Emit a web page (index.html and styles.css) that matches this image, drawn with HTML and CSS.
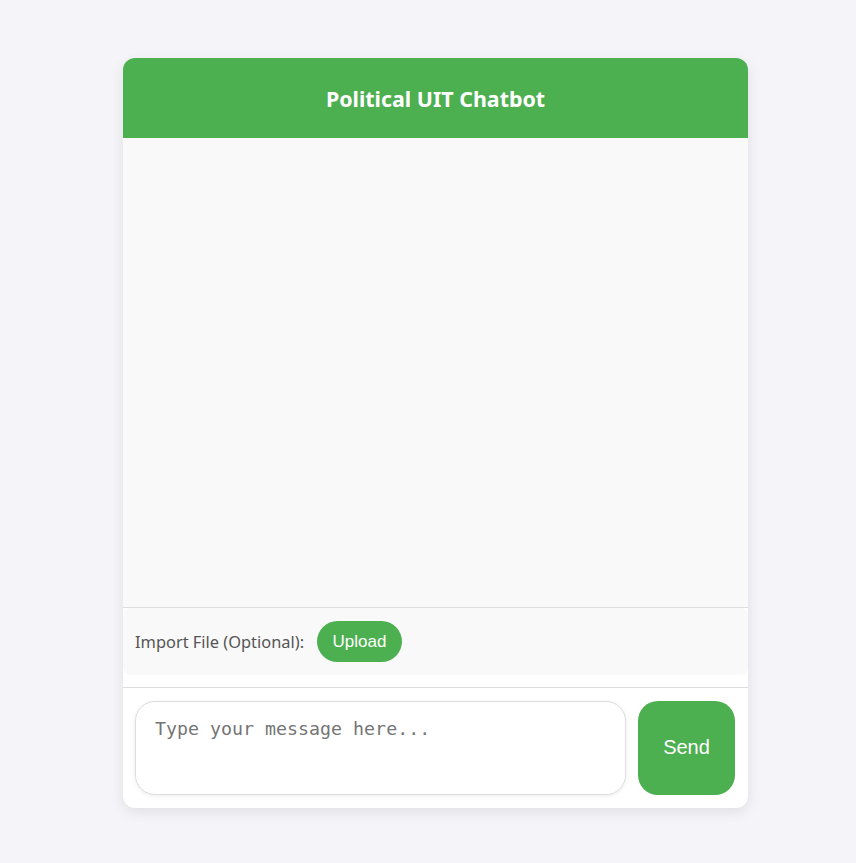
FILE: index.html
```html
<!DOCTYPE html>
<html lang="en">
<head>
<meta charset="utf-8">
<title>Political UIT Chatbot</title>
<link rel="stylesheet" href="styles.css">
</head>
<body>
<div class="chat-card">
  <header class="chat-header">Political UIT Chatbot</header>
  <div class="chat-messages"></div>
  <div class="upload-area">
    <span class="upload-label">Import File (Optional):</span>
    <button class="upload-btn" type="button">Upload</button>
  </div>
  <form class="chat-form" onsubmit="return false;">
    <textarea class="chat-input" placeholder="Type your message here..."></textarea>
    <button class="send-btn" type="submit">Send</button>
  </form>
</div>
</body>
</html>
```
FILE: styles.css
```css
html, body {
  margin: 0;
  padding: 0;
}
body {
  background: #f4f4f9;
  font-family: "Noto Sans", "Open Sans", sans-serif;
  min-height: 863px;
  display: flex;
  justify-content: center;
  align-items: flex-start;
}
.chat-card {
  margin-top: 58px;
  margin-left: 15px;
  width: 625px;
  background: #ffffff;
  border-radius: 12px;
  box-shadow: 0 4px 14px rgba(0, 0, 0, 0.09);
  overflow: hidden;
  display: flex;
  flex-direction: column;
}
.chat-header {
  height: 80px;
  background: #4caf50;
  color: #ffffff;
  font-weight: 700;
  font-size: 21.4px;
  display: flex;
  align-items: center;
  justify-content: center;
}
.chat-messages {
  height: 469px;
  background: #f9f9f9;
  border-bottom: 1px solid #dddddd;
}
.upload-area {
  height: 67px;
  box-sizing: border-box;
  background: #f9f9f9;
  border-radius: 8px;
  margin-bottom: 12px;
  padding: 0 12px;
  display: flex;
  align-items: center;
  gap: 13px;
}
.upload-label {
  color: #555555;
  font-size: 16.4px;
}
.upload-btn {
  height: 41px;
  width: 85px;
  border: none;
  border-radius: 21px;
  background: #4caf50;
  color: #ffffff;
  font-family: "Liberation Sans", Arial, sans-serif;
  font-size: 17px;
  padding: 0;
}
.chat-form {
  border-top: 1px solid #dddddd;
  padding: 13px 13px 13px 12px;
  display: flex;
  gap: 12px;
}
.chat-input {
  flex: 1;
  height: 94px;
  box-sizing: border-box;
  border: 1px solid #dddddd;
  border-radius: 20px;
  padding: 16px 19px 15px;
  font-family: "DejaVu Sans Mono", monospace;
  font-size: 18.3px;
  resize: none;
  box-shadow: 0 1px 4px rgba(0, 0, 0, 0.08);
  outline: none;
  margin: 0;
}
.chat-input::placeholder {
  color: #757575;
}
.send-btn {
  width: 97px;
  height: 94px;
  border: none;
  border-radius: 20px;
  background: #4caf50;
  color: #ffffff;
  font-family: "Liberation Sans", Arial, sans-serif;
  font-size: 20px;
  padding: 0 0 1px;
}
```
